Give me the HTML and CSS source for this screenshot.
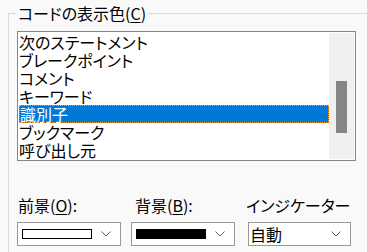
FILE: index.html
```html
<!DOCTYPE html>
<html>
<head>
	<meta charset="UTF-8">
	<meta name="viewport" content="width=device-width, initial-scale=1.0">
	<title>コードの表示色</title>
	<link rel="stylesheet" href="styles.css">
</head>
<body>
	<fieldset class="group">
		<legend>コードの表示色(<u>C</u>)</legend>

		<div class="listbox">
			<ul class="items">
				<li>次のステートメント</li>
				<li>ブレークポイント</li>
				<li>コメント</li>
				<li>キーワード</li>
				<li class="selected">識別子</li>
				<li>ブックマーク</li>
				<li>呼び出し元</li>
			</ul>
			<div class="scrollbar">
				<div class="thumb"></div>
			</div>
		</div>

		<div class="options">
			<div class="field fg">
				<label class="label">前景(<u>O</u>):</label>
				<div class="combo">
					<span class="swatch white"></span>
					<svg class="chevron" width="10" height="6" viewBox="0 0 10 6"><polyline points="0.5,0.5 5,5 9.5,0.5" fill="none" stroke="#606060" stroke-width="1"/></svg>
				</div>
			</div>
			<div class="field bg">
				<label class="label">背景(<u>B</u>):</label>
				<div class="combo">
					<span class="swatch black"></span>
					<svg class="chevron" width="10" height="6" viewBox="0 0 10 6"><polyline points="0.5,0.5 5,5 9.5,0.5" fill="none" stroke="#606060" stroke-width="1"/></svg>
				</div>
			</div>
			<div class="field ind">
				<label class="label">インジケーター</label>
				<div class="combo">
					<span class="value">自動</span>
					<svg class="chevron" width="10" height="6" viewBox="0 0 10 6"><polyline points="0.5,0.5 5,5 9.5,0.5" fill="none" stroke="#606060" stroke-width="1"/></svg>
				</div>
			</div>
		</div>
	</fieldset>
</body>
</html>
```

FILE: styles.css
```css
html, body {
	margin: 0;
	height: 252px;
	overflow: hidden;
	background: #f9f9f9;
}

body {
	font-family: "Noto Sans CJK JP", sans-serif;
	font-size: 16px;
	font-feature-settings: "palt";
	color: #000;
}

u {
	text-decoration-thickness: 1px;
	text-underline-offset: 2px;
}

.group {
	margin: 4px -60px 0 8px;
	padding: 0 0 40px 8px;
	border: 1px solid #dcdcdc;
	min-width: 0;
}

.group legend {
	padding: 0 2px;
	margin-left: -1px;
	line-height: 18px;
}

.listbox {
	display: flex;
	width: 335px;
	height: 126px;
	margin-top: 9px;
	padding: 1px;
	border: 1px solid #828790;
	background: #fff;
}

.items {
	list-style-type: none;
	margin: 0;
	padding: 0;
	width: 310px;
}

.items li {
	height: 18px;
	line-height: 18px;
	white-space: nowrap;
}

.items li.selected {
	background: #0078d7;
	color: #fff;
	box-sizing: border-box;
	border: 1px dotted #f5a03c;
	line-height: 16px;
}

.scrollbar {
	width: 25px;
	background: #f0f0f0;
}

.thumb {
	width: 11px;
	height: 52px;
	margin: 48px 0 0 7px;
	background: #858585;
}

.options {
	display: flex;
	margin-top: 35px;
}

.field {
	display: flex;
	flex-direction: column;
}

.fg {
	width: 114px;
}

.bg {
	width: 117px;
}

.ind {
	width: 103px;
}

.label {
	line-height: 18px;
	height: 18px;
}

.fg .label {
	padding-left: 1px;
}

.bg .label {
	padding-left: 4px;
}

.ind .label {
	margin-left: -2px;
}

.combo {
	display: flex;
	align-items: center;
	justify-content: space-between;
	box-sizing: border-box;
	width: 104px;
	height: 24px;
	margin-top: 8px;
	padding: 0 9px 0 4px;
	border: 1px solid #999;
	background: #fff;
}

.ind .combo {
	width: 103px;
	padding-left: 1px;
}

.swatch {
	box-sizing: border-box;
	width: 70px;
	height: 10px;
	border: 1px solid #000;
}

.swatch.white {
	background: #fff;
}

.swatch.black {
	background: #000;
}

.value {
	line-height: 18px;
}
```
